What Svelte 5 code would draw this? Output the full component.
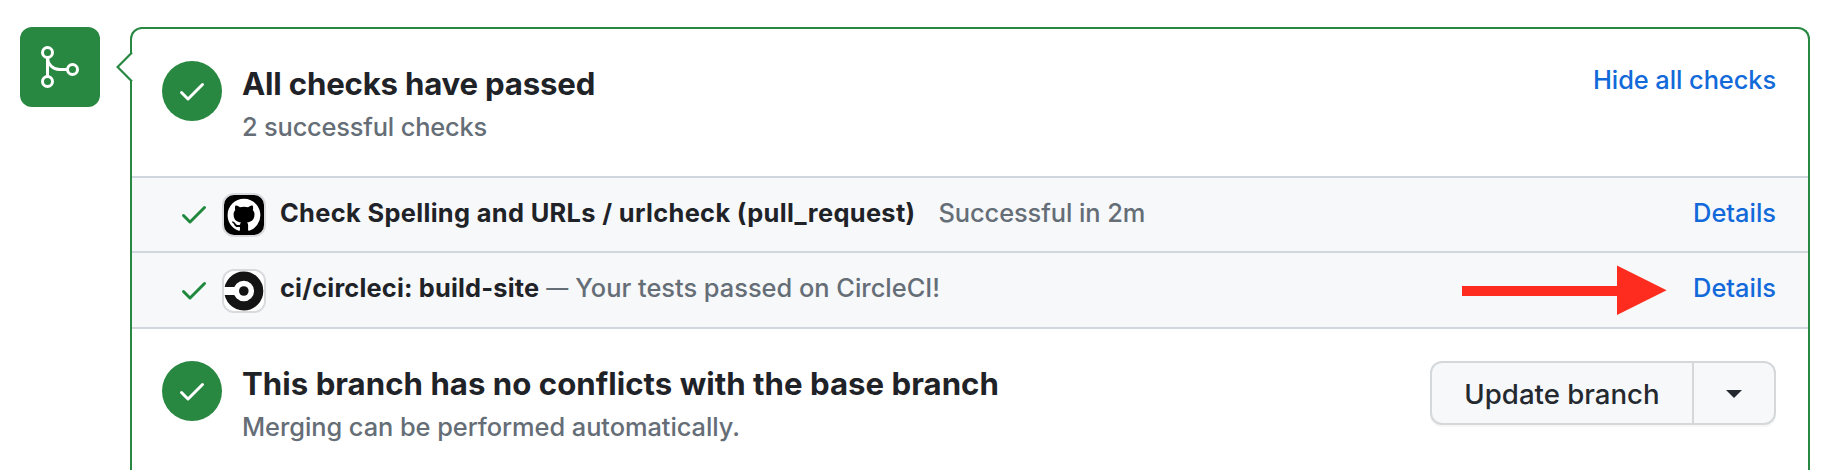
<script>
  const check =
    'M13.78 4.22a.75.75 0 010 1.06l-7.25 7.25a.75.75 0 01-1.06 0L2.22 9.28a.75.75 0 011.06-1.06L6 10.94l6.72-6.72a.75.75 0 011.06 0z';
  const mark =
    'M8 0C3.58 0 0 3.58 0 8c0 3.54 2.29 6.53 5.47 7.59.4.07.55-.17.55-.38 0-.19-.01-.82-.01-1.49-2.01.37-2.53-.49-2.69-.94-.09-.23-.48-.94-.82-1.13-.28-.15-.68-.52-.01-.53.63-.01 1.08.58 1.23.82.72 1.21 1.87.87 2.33.66.07-.52.28-.87.51-1.07-1.78-.2-3.64-.89-3.64-3.95 0-.87.31-1.59.82-2.15-.08-.2-.36-1.02.08-2.12 0 0 .67-.21 2.2.82.64-.18 1.32-.27 2-.27.68 0 1.36.09 2 .27 1.53-1.04 2.2-.82 2.2-.82.44 1.1.16 1.92.08 2.12.51.56.82 1.27.82 2.15 0 3.07-1.87 3.75-3.65 3.95.29.25.54.73.54 1.48 0 1.07-.01 1.93-.01 2.2 0 .21.15.46.55.38A8.013 8.013 0 0016 8c0-4.42-3.58-8-8-8z';
</script>

{#snippet tick()}
  <svg class="tick" width="32" height="32" viewBox="0 0 16 16"><path d={check} fill="currentColor" /></svg>
{/snippet}

<main>
  <div class="badge">
    <svg width="48" height="48" viewBox="0 0 24 24" fill="none" stroke="#fff" stroke-width="1.5">
      <circle cx="5.75" cy="4.75" r="2.5" />
      <circle cx="5.75" cy="19.25" r="2.5" />
      <circle cx="18.25" cy="13.25" r="2.5" />
      <path d="M5.75 7.25v9.5M5.75 7.25a6 6 0 006 6h4" />
    </svg>
  </div>

  <section class="card">
    <svg class="notch" width="18" height="32" viewBox="0 0 18 32">
      <path d="M18 1.2L16 1.6 1.8 16 16 30.4l2 .4z" fill="#fff" />
      <path d="M16 1.4L1.6 16 16 30.6" fill="none" stroke="#288740" stroke-width="2.2" />
    </svg>

    <div class="block summary">
      <div class="circle">{@render tick()}</div>
      <div class="text">
        <h2><span class="h-checks">All checks have passed</span></h2>
        <p><span class="p-checks">2 successful checks</span></p>
      </div>
      <a class="hide" href="#checks">Hide all checks</a>
    </div>

    <div class="row first">
      {@render tick()}
      <div class="avatar">
        <svg width="40" height="40" viewBox="0 0 40 40">
          <rect width="40" height="40" fill="#000" />
          <g transform="translate(3.6 3.8) scale(2.05)"><path d={mark} fill="#fff" /></g>
        </svg>
      </div>
      <strong class="n1">Check Spelling and URLs / urlcheck (pull_request)</strong>
      <span class="muted m1">Successful in 2m</span>
      <a class="details" href="#spelling">Details</a>
    </div>

    <div class="row second">
      {@render tick()}
      <div class="avatar">
        <svg width="40" height="40" viewBox="0 0 40 40">
          <rect width="40" height="40" fill="#fff" />
          <circle cx="19.8" cy="20" r="14.9" fill="none" stroke="#141414" stroke-width="9.2" />
          <rect y="16" width="11" height="8" fill="#fff" />
          <circle cx="19.8" cy="20" r="4.8" fill="#141414" />
        </svg>
      </div>
      <strong class="n2">ci/circleci: build-site</strong>
      <span class="muted dash">—</span>
      <span class="muted m2">Your tests passed on CircleCI!</span>
      <a class="details" href="#circleci">Details</a>
      <svg class="arrow" width="206" height="52" viewBox="0 0 206 52">
        <path d="M0 21h155V.5L204.6 25.2 155 50V31H0z" fill="#fd2c1e" />
      </svg>
    </div>

    <div class="block">
      <div class="circle">{@render tick()}</div>
      <div class="text">
        <h2><span class="h-branch">This branch has no conflicts with the base branch</span></h2>
        <p><span class="p-branch">Merging can be performed automatically.</span></p>
      </div>
      <div class="group">
        <button class="update"><span>Update branch</span></button>
        <button class="more" aria-label="Select update method">
          <svg width="16" height="8" viewBox="0 0 16 8"><path d="M0 0h16L8 8z" fill="#24292f" /></svg>
        </button>
      </div>
    </div>
  </section>
</main>

<style>
  :global(body) { background: #fff; overflow: hidden; }
  main {
    box-sizing: border-box;
    display: flex;
    align-items: flex-start;
    gap: 30px;
    width: 1846px;
    height: 470px;
    padding: 27px 36px 0 20px;
    overflow: hidden;
    font-family: Inter, "Liberation Sans", sans-serif;
    font-size: 25.4px;
    font-weight: 450;
    line-height: 39px;
    color: #1f2328;
    white-space: nowrap;
  }
  svg { display: block; flex: none; }
  .badge {
    display: grid;
    place-items: center;
    flex: none;
    width: 80px;
    height: 80px;
    border-radius: 12px;
    background: #288740;
  }
  .card {
    box-sizing: border-box;
    position: relative;
    flex: 1;
    height: 443px;
    border: 2px solid #288740;
    border-bottom: 0;
    border-radius: 12px 12px 0 0;
  }
  .notch { position: absolute; left: -16px; top: 22px; }
  .block {
    box-sizing: border-box;
    display: flex;
    align-items: flex-start;
    padding: 32px 32px 0 30px;
  }
  .summary { height: 147px; }
  .circle {
    display: grid;
    place-items: center;
    flex: none;
    width: 60px;
    height: 60px;
    border-radius: 50%;
    background: #288740;
    color: #fff;
  }
  .text { flex: 1; margin: -1px 0 0 20px; }
  h2 { margin: 0; font-size: 31.2px; line-height: 48px; font-weight: 650; }
  .h-checks { letter-spacing: -0.2px; }
  .h-branch { letter-spacing: 0.02px; }
  .p-checks { letter-spacing: -0.18px; }
  .p-branch { letter-spacing: -0.06px; }
  .hide { margin-top: -1px; letter-spacing: -0.07px; }
  p { margin: -1px 0 0; color: #656d76; }
  a { color: #1169da; text-decoration: none; }
  .row {
    box-sizing: border-box;
    position: relative;
    display: flex;
    align-items: flex-start;
    padding: 15px 32px 0 46px;
    background: #f6f8fa;
    border-top: 2px solid #d0d7de;
  }
  .first { height: 75px; }
  .second { height: 78px; padding-top: 16px; border-bottom: 2px solid #d0d7de; }
  .second > strong, .second > .m2, .second > a { margin-top: -1px; }
  .row .tick { margin-top: 5px; color: #1f883d; }
  .avatar {
    flex: none;
    width: 40px;
    height: 40px;
    margin: 0 14px 0 12px;
    border: 2px solid #d8dade;
    border-radius: 12px;
    overflow: hidden;
  }
  strong { font-weight: 650; }
  .n1 { letter-spacing: 0.34px; }
  .n2 { letter-spacing: 0.18px; }
  .muted { color: #656d76; }
  .m1 { margin-left: 23px; letter-spacing: -0.07px; }
  .dash { margin-left: 7px; font-size: 22px; font-weight: 500; }
  .m2 { margin-left: 7px; }
  .details { margin-left: auto; }
  .arrow { position: absolute; left: 1330px; top: 12px; }
  .group {
    box-sizing: border-box;
    display: flex;
    width: 346px;
    height: 64px;
    border: 2px solid #d5d8da;
    border-radius: 12px;
    background: #f6f8fa;
    box-shadow: 0 2px 0 rgba(31, 35, 40, 0.04);
  }
  button {
    display: grid;
    place-items: center;
    padding: 0;
    border: 0;
    background: none;
    font: 500 27.6px/40px Inter, sans-serif;
    color: #24292f;
  }
  .update { width: 260px; padding-top: 2px; }
  .more { flex: 1; padding-top: 2px; border-left: 2px solid #d5d8da; }
</style>
